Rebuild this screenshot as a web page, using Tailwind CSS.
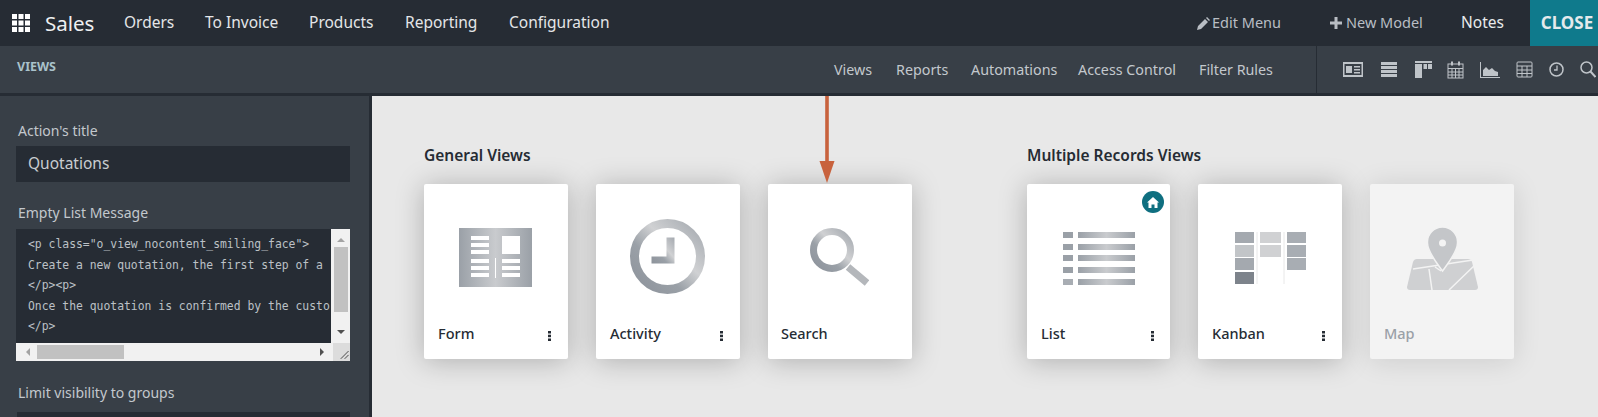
<!DOCTYPE html>
<html>
<head>
  <meta charset="UTF-8">
  <meta name="viewport" content="width=device-width, initial-scale=1.0">
  <script src="https://cdn.jsdelivr.net/npm/@tailwindcss/browser@4"></script>
</head>
<body class="h-[417px] overflow-hidden bg-[#e8e8e8] font-['Noto_Sans',sans-serif]">
  <svg class="absolute w-0 h-0">
    <defs>
      <linearGradient id="duo" x1="0" y1="1" x2="1" y2="0">
        <stop offset="0" stop-color="#8d939b"/>
        <stop offset="0.35" stop-color="#9aa0a7"/>
        <stop offset="0.6" stop-color="#d0d1d3"/>
        <stop offset="1" stop-color="#a4a9af"/>
      </linearGradient>
      <linearGradient id="duoh" x1="0" y1="0" x2="1" y2="0">
        <stop offset="0" stop-color="#9aa0a7"/>
        <stop offset="0.5" stop-color="#c9cbce"/>
        <stop offset="1" stop-color="#9aa0a7"/>
      </linearGradient>
    </defs>
  </svg>

  <!-- Top bar -->
  <nav class="h-[46px] bg-[#262c34] flex items-center text-[#e4e6e8] text-[15.5px]">
    <svg class="ml-[12px] w-[18px] h-[18px]" viewBox="0 0 18 18" fill="#fff">
      <rect width="5" height="5"/><rect x="6.5" width="5" height="5"/><rect x="13" width="5" height="5"/>
      <rect y="6.5" width="5" height="5"/><rect x="6.5" y="6.5" width="5" height="5"/><rect x="13" y="6.5" width="5" height="5"/>
      <rect y="13" width="5" height="5"/><rect x="6.5" y="13" width="5" height="5"/><rect x="13" y="13" width="5" height="5"/>
    </svg>
    <span class="ml-[15px] w-[79px] text-[20.5px] text-[#eef0f1]">Sales</span>
    <a class="w-[81px]">Orders</a>
    <a class="w-[104px]">To Invoice</a>
    <a class="w-[96px]">Products</a>
    <a class="w-[104px]">Reporting</a>
    <a class="w-[110px]">Configuration</a>
    <div class="ml-auto flex items-center h-full">
      <svg class="w-[13px] h-[13px] mr-[2px]" viewBox="0 0 13 13" fill="#b9bec4"><path d="M0 13l1-4 7-7 3 3-7 7zM9 1l1-1 3 3-1 1z"/></svg>
      <span class="w-[118px] text-[14.5px] text-[#b9bec4]">Edit Menu</span>
      <svg class="w-[12px] h-[12px] mr-[4px]" viewBox="0 0 12 12" fill="#b9bec4"><path d="M4.5 0h3v4.5H12v3H7.500V12h-3V7.500H0v-3h4.500z"/></svg>
      <span class="w-[115px] text-[14.5px] text-[#b9bec4]">New Model</span>
      <span class="w-[69px] text-[#e9ebec]">Notes</span>
      <span class="w-[68px] h-full bg-[#0f7a8c] flex items-center justify-center pl-[6px] font-bold text-[17px] text-[#e4eaec]">CLOSE</span>
    </div>
  </nav>

  <!-- Sub bar -->
  <div class="h-[50px] bg-[#383f47] border-b-[3px] border-[#262c34] flex items-center">
    <span class="ml-[17px] -mt-[5px] text-[12.5px] font-bold text-[#a9c2cb]">VIEWS</span>
    <div class="ml-auto flex items-center text-[14.3px] text-[#c3c8cd]">
      <a class="w-[62px]">Views</a>
      <a class="w-[75px]">Reports</a>
      <a class="w-[107px]">Automations</a>
      <a class="w-[121px]">Access Control</a>
      <a class="w-[117px]">Filter Rules</a>
    </div>
    <div class="h-full w-[282px] border-l border-[#262c34] flex items-center pl-[26px] gap-[15.800px] text-[#bfc4c9]">
      <svg class="w-[20px] h-[15px]" viewBox="0 0 20 15" fill="currentColor"><path fill-rule="evenodd" d="M0 0h20v15H0zM1.500 2v11h17V2z"/><rect x="3" y="4" width="6" height="7"/><rect x="11" y="4" width="6" height="1.500"/><rect x="11" y="7" width="6" height="1.500"/><rect x="11" y="10" width="6" height="1.500"/></svg>
      <svg class="w-[20px] h-[15px]" viewBox="0 0 20 15" fill="currentColor"><rect width="16" height="3" x="2"/><rect width="16" height="3" x="2" y="4"/><rect width="16" height="3" x="2" y="8"/><rect width="16" height="3" x="2" y="12"/></svg>
      <svg class="w-[17px] h-[17px]" viewBox="0 0 17 17" fill="currentColor"><rect width="17" height="2"/><rect y="3" width="7" height="14"/><rect x="8.500" y="3" width="3.500" height="5"/><rect x="13" y="3" width="4" height="5"/></svg>
      <svg class="w-[17px] h-[18px]" viewBox="0 0 17 18" fill="none" stroke="currentColor"><rect x="1" y="3" width="15" height="14"/><path d="M1 7.500h15M1 11h15M1 14h15M5 7.500V17M8.500 7.500V17M12 7.500V17"/><path d="M5 0.500v4M12 0.500v4" stroke-width="2"/></svg>
      <svg class="w-[20px] h-[16px]" viewBox="0 0 20 16" fill="currentColor"><path d="M0 0h1v15h19v1H0z"/><path d="M3 14V8l3-3 3 3 3-2 3 3 3 1v4z"/></svg>
      <svg class="w-[17px] h-[17px]" viewBox="0 0 17 17" fill="none" stroke="currentColor"><rect x="1" y="1" width="15" height="15" rx="1"/><path d="M1 5h15M1 9h15M1 12.500h15M6 5v11M11 5v11"/></svg>
      <svg class="w-[15px] h-[15px]" viewBox="0 0 15 15" fill="none" stroke="currentColor"><circle cx="7.500" cy="7.500" r="6.500" stroke-width="1.500"/><path d="M8 3.500V8H5" stroke-width="1.300"/></svg>
      <svg class="w-[16px] h-[17px] shrink-0" viewBox="0 0 16 17" fill="none" stroke="currentColor"><circle cx="6.500" cy="6.500" r="5.500" stroke-width="1.500"/><path d="M10.500 10.500L15.500 16" stroke-width="2"/></svg>
    </div>
  </div>

  <div class="flex h-[321px] overflow-hidden">
    <!-- Sidebar -->
    <aside class="w-[372px] shrink-0 h-full bg-[#383f47] border-r-[3px] border-[#262c34] pl-[16px] pt-[25px] text-[14px] text-[#c3c8cd]">
      <div class="w-[334px]">
        <label class="block h-5 leading-5 pl-[2px] mb-[5px]">Action's title</label>
        <div class="h-[36px] bg-[#262c34] pl-[12px] flex items-center text-[15.5px] text-[#c9cdd1]">Quotations</div>
        <label class="block h-5 leading-5 pl-[2px] mt-[21px] mb-[6px]">Empty List Message</label>
        <div class="h-[132px] flex flex-col bg-white">
          <div class="flex h-[114px]">
            <div class="w-[315px] bg-[#262c34] pl-[12px] pt-[5px] overflow-hidden whitespace-nowrap font-['DejaVu_Sans_Mono',monospace] text-[11.4px] leading-[20.500px] text-[#bcc1c6]">
              <p>&lt;p class="o_view_nocontent_smiling_face"&gt;</p>
              <p>Create a new quotation, the first step of a</p>
              <p>&lt;/p&gt;&lt;p&gt;</p>
              <p>Once the quotation is confirmed by the custo</p>
              <p>&lt;/p&gt;</p>
            </div>
            <div class="w-[19px] bg-[#f1f1f1] flex flex-col items-center pt-[9px]">
              <div class="w-0 h-0 border-x-[4px] border-x-transparent border-b-[4px] border-b-[#a3a3a3]"></div>
              <div class="w-[14px] h-[65px] mt-[5px] bg-[#c1c1c1]"></div>
              <div class="w-0 h-0 mt-[18px] border-x-[4px] border-x-transparent border-t-[4px] border-t-[#505050]"></div>
            </div>
          </div>
          <div class="flex h-[18px] bg-[#f1f1f1] items-center pl-[10px]">
            <div class="w-0 h-0 border-y-[4px] border-y-transparent border-r-[4px] border-r-[#a3a3a3]"></div>
            <div class="w-[89px] h-[14px] ml-[7px] bg-[#c1c1c1]"></div>
            <div class="w-0 h-0 ml-[196px] border-y-[4px] border-y-transparent border-l-[4px] border-l-[#505050]"></div>
            <svg class="ml-[9px] w-[18px] h-[18px] bg-[#dcdcdc]" viewBox="0 0 18 18" stroke="#444" fill="none"><path d="M8 16l8-8M12 16l4-4"/></svg>
          </div>
        </div>
        <label class="block h-5 leading-5 pl-[2px] mt-[22px] mb-[9px]">Limit visibility to groups</label>
        <div class="h-[36px] ml-[1px] bg-[#262c34]"></div>
      </div>
    </aside>

    <!-- Views -->
    <main class="relative flex-1 pl-[52px] pt-[49px] flex text-[#262c34]">
      <section class="w-[488px] mr-[115px]">
        <h2 class="h-5 leading-5 mb-[19px] text-[15.5px] font-semibold">General Views</h2>
        <div class="flex gap-[28px]">
          <div class="w-[144px] h-[175px] rounded-[2px] bg-white shadow-[0_2px_28px_rgba(0,0,0,0.25)]">
            <div class="h-[140px] flex justify-center pt-[44px] pr-[2px]">
              <svg class="w-[73px] h-[59px]" viewBox="0 0 73 59">
                <rect width="73" height="59" fill="url(#duoh)"/>
                <g fill="#fff">
                  <rect x="12" y="8" width="18" height="4"/><rect x="12" y="15" width="18" height="4"/><rect x="12" y="22" width="18" height="4"/>
                  <rect x="12" y="31" width="18" height="4"/><rect x="12" y="38" width="18" height="4"/><rect x="12" y="45" width="18" height="4"/>
                  <rect x="43" y="8" width="18" height="18"/>
                  <rect x="43" y="31" width="18" height="4"/><rect x="43" y="38" width="18" height="4"/><rect x="43" y="45" width="18" height="4"/>
                  <rect x="36" y="30" width="1" height="20"/>
                </g>
              </svg>
            </div>
            <div class="h-5 flex items-center justify-between pl-[14px] pr-[17px] text-[14.5px] font-medium">
              <span class="-mt-[1px]">Form</span>
              <svg class="w-[3px] h-[10px] mt-[4px]" viewBox="0 0 3 10" fill="#262c34"><rect width="3" height="2.500"/><rect y="3.700" width="3" height="2.500"/><rect y="7.500" width="3" height="2.500"/></svg>
            </div>
          </div>
          <div class="w-[144px] h-[175px] rounded-[2px] bg-white shadow-[0_2px_28px_rgba(0,0,0,0.25)]">
            <div class="h-[140px] flex justify-center pt-[35px] pr-[2px]">
              <svg class="w-[75px] h-[75px]" viewBox="0 0 75 75">
                <circle cx="37.500" cy="37.500" r="33" fill="none" stroke="url(#duo)" stroke-width="9"/>
                <path d="M36.500 18.500h8v26h-23v-7h15z" fill="url(#duo)"/>
              </svg>
            </div>
            <div class="h-5 flex items-center justify-between pl-[14px] pr-[17px] text-[14.5px] font-medium">
              <span class="-mt-[1px]">Activity</span>
              <svg class="w-[3px] h-[10px] mt-[4px]" viewBox="0 0 3 10" fill="#262c34"><rect width="3" height="2.500"/><rect y="3.700" width="3" height="2.500"/><rect y="7.500" width="3" height="2.500"/></svg>
            </div>
          </div>
          <div class="w-[144px] h-[175px] rounded-[2px] bg-white shadow-[0_2px_28px_rgba(0,0,0,0.25)]">
            <div class="h-[140px] flex justify-center pt-[44px] pr-[2px]">
              <svg class="w-[59px] h-[58px]" viewBox="0 0 59 58" fill="none">
                <circle cx="22" cy="22" r="18.500" stroke="url(#duo)" stroke-width="7"/>
                <path d="M38 39l19 16" stroke="#b4b7bb" stroke-width="7"/>
              </svg>
            </div>
            <div class="h-5 flex items-center pl-[13px] text-[14.5px] font-medium"><span class="-mt-[1px]">Search</span></div>
          </div>
        </div>
      </section>

      <section>
        <h2 class="h-5 leading-5 mb-[19px] text-[15.5px] font-semibold">Multiple Records Views</h2>
        <div class="flex gap-[28px]">
          <div class="relative w-[143px] h-[175px] rounded-[2px] bg-white shadow-[0_2px_28px_rgba(0,0,0,0.25)]">
            <span class="absolute top-[7px] right-[6px] w-[22px] h-[22px] rounded-full bg-[#0f6f80] flex items-center justify-center">
              <svg class="w-[12px] h-[11px]" viewBox="0 0 12 11" fill="#fff"><path d="M6 0l6 5.500h-1.500V11H7.500V7.500h-3V11H1.500V5.500H0z"/></svg>
            </span>
            <div class="h-[140px] flex justify-center pt-[48px]">
              <svg class="w-[72px] h-[53px]" viewBox="0 0 72 53" fill="url(#duoh)">
                <rect y="0" width="10" height="6" fill="#9aa0a7"/><rect x="15" y="0" width="57" height="6"/>
                <rect y="12" width="10" height="6" fill="#9aa0a7"/><rect x="15" y="12" width="57" height="6"/>
                <rect y="23" width="10" height="6" fill="#9aa0a7"/><rect x="15" y="23" width="57" height="6"/>
                <rect y="35" width="10" height="6" fill="#9aa0a7"/><rect x="15" y="35" width="57" height="6"/>
                <rect y="47" width="10" height="6" fill="#a8adb3"/><rect x="15" y="47" width="57" height="6"/>
              </svg>
            </div>
            <div class="h-5 flex items-center justify-between pl-[14px] pr-[16px] text-[14.5px] font-medium">
              <span class="-mt-[1px]">List</span>
              <svg class="w-[3px] h-[10px] mt-[4px]" viewBox="0 0 3 10" fill="#262c34"><rect width="3" height="2.500"/><rect y="3.700" width="3" height="2.500"/><rect y="7.500" width="3" height="2.500"/></svg>
            </div>
          </div>
          <div class="w-[144px] h-[175px] rounded-[2px] bg-white shadow-[0_2px_28px_rgba(0,0,0,0.25)]">
            <div class="h-[140px] flex justify-center pt-[48px]">
              <svg class="w-[71px] h-[52px]" viewBox="0 0 71 52">
                <path d="M22 0v52M49 0v52" stroke="#e8e8e8"/>
                <rect width="19" height="11" fill="#a4a9af"/><rect y="13" width="19" height="12" fill="#c2c5c8"/><rect y="26" width="19" height="12" fill="#a4a9af"/><rect y="40" width="19" height="12" fill="#7d838b"/>
                <rect x="25" width="21" height="11" fill="#d0d1d3"/><rect x="25" y="13" width="21" height="12" fill="#d0d1d3"/>
                <rect x="52" width="19" height="11" fill="#a8adb3"/><rect x="52" y="13" width="19" height="12" fill="#a8adb3"/><rect x="52" y="26" width="19" height="12" fill="#a8adb3"/>
              </svg>
            </div>
            <div class="h-5 flex items-center justify-between pl-[14px] pr-[17px] text-[14.5px] font-medium">
              <span class="-mt-[1px]">Kanban</span>
              <svg class="w-[3px] h-[10px] mt-[4px]" viewBox="0 0 3 10" fill="#262c34"><rect width="3" height="2.500"/><rect y="3.700" width="3" height="2.500"/><rect y="7.500" width="3" height="2.500"/></svg>
            </div>
          </div>
          <div class="w-[144px] h-[175px] rounded-[2px] bg-[#f3f3f3] shadow-[0_2px_28px_rgba(0,0,0,0.12)]">
            <div class="h-[140px] flex justify-center pt-[43px]">
              <svg class="w-[71px] h-[63px]" viewBox="0 0 71 63">
                <path d="M10 32h51q3 0 4 3l6 25q0 3-3 3H3q-3 0-3-3l6-25q1-3 4-3z" fill="#cfd0d2"/>
                <path d="M6 42l60-9M22 42l3 21M42 63l27-26M28 40l6 4" stroke="#f3f3f3" stroke-width="1.500" fill="none"/>
                <path d="M35.500 0a15 15 0 0 1 15 16c0 9-10 21-15 28-5-7-15-19-15-28a15 15 0 0 1 15-16z" fill="#c4c6c9" stroke="#f3f3f3" stroke-width="1.500"/>
                <circle cx="35.500" cy="16" r="3.500" fill="#f3f3f3"/>
              </svg>
            </div>
            <div class="h-5 flex items-center pl-[14px] text-[14.5px] font-medium text-[#9aa0a7]"><span class="-mt-[1px]">Map</span></div>
          </div>
        </div>
      </section>

      <!-- Annotation arrow drawn over the screenshot -->
      <svg class="absolute left-[447px] top-[-2px] w-[16px] h-[90px]" viewBox="0 0 16 90" fill="#c8623d">
        <rect x="6.200" y="0" width="3.600" height="68"/>
        <path d="M0.500 67h15l-7.500 22z"/>
      </svg>
    </main>
  </div>
</body>
</html>
